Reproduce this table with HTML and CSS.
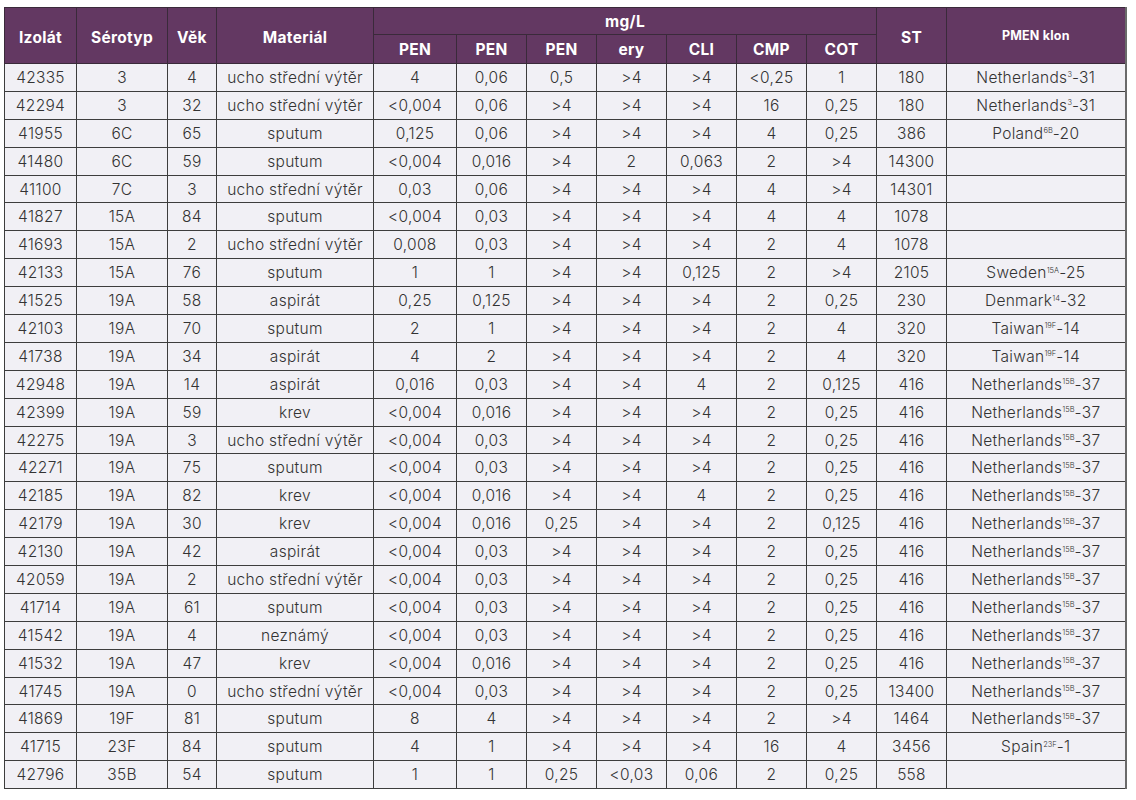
FILE: index.html
```html
<!DOCTYPE html>
<html lang="cs">
<head>
<meta charset="utf-8">
<title>Izoláty</title>
<link rel="stylesheet" href="styles.css">
</head>
<body>
<table class="mic">
<colgroup>
<col class="c-iz"><col class="c-ser"><col class="c-vek"><col class="c-mat">
<col class="c-pen1"><col class="c-n"><col class="c-n"><col class="c-n"><col class="c-n"><col class="c-n"><col class="c-n">
<col class="c-st"><col class="c-pmen">
</colgroup>
<thead>
<tr class="h1">
<th rowspan="2" class="tall">Izolát</th><th rowspan="2" class="tall">Sérotyp</th><th rowspan="2" class="tall">Věk</th><th rowspan="2" class="tall">Materiál</th>
<th colspan="7">mg/L</th><th rowspan="2" class="tall">ST</th><th rowspan="2" class="tall small">PMEN klon</th>
</tr>
<tr class="h2">
<th>PEN</th><th>PEN</th><th>PEN</th><th>ery</th><th>CLI</th><th>CMP</th><th>COT</th>
</tr>
</thead>
<tbody>
<tr><td>42335</td><td>3</td><td>4</td><td>ucho střední výtěr</td><td>4</td><td>0,06</td><td>0,5</td><td>&gt;4</td><td>&gt;4</td><td>&lt;0,25</td><td>1</td><td>180</td><td>Netherlands<sup>3</sup>-31</td></tr>
<tr><td>42294</td><td>3</td><td>32</td><td>ucho střední výtěr</td><td>&lt;0,004</td><td>0,06</td><td>&gt;4</td><td>&gt;4</td><td>&gt;4</td><td>16</td><td>0,25</td><td>180</td><td>Netherlands<sup>3</sup>-31</td></tr>
<tr><td>41955</td><td>6C</td><td>65</td><td>sputum</td><td>0,125</td><td>0,06</td><td>&gt;4</td><td>&gt;4</td><td>&gt;4</td><td>4</td><td>0,25</td><td>386</td><td>Poland<sup>6B</sup>-20</td></tr>
<tr><td>41480</td><td>6C</td><td>59</td><td>sputum</td><td>&lt;0,004</td><td>0,016</td><td>&gt;4</td><td>2</td><td>0,063</td><td>2</td><td>&gt;4</td><td>14300</td><td></td></tr>
<tr><td>41100</td><td>7C</td><td>3</td><td>ucho střední výtěr</td><td>0,03</td><td>0,06</td><td>&gt;4</td><td>&gt;4</td><td>&gt;4</td><td>4</td><td>&gt;4</td><td>14301</td><td></td></tr>
<tr><td>41827</td><td>15A</td><td>84</td><td>sputum</td><td>&lt;0,004</td><td>0,03</td><td>&gt;4</td><td>&gt;4</td><td>&gt;4</td><td>4</td><td>4</td><td>1078</td><td></td></tr>
<tr><td>41693</td><td>15A</td><td>2</td><td>ucho střední výtěr</td><td>0,008</td><td>0,03</td><td>&gt;4</td><td>&gt;4</td><td>&gt;4</td><td>2</td><td>4</td><td>1078</td><td></td></tr>
<tr><td>42133</td><td>15A</td><td>76</td><td>sputum</td><td>1</td><td>1</td><td>&gt;4</td><td>&gt;4</td><td>0,125</td><td>2</td><td>&gt;4</td><td>2105</td><td>Sweden<sup>15A</sup>-25</td></tr>
<tr><td>41525</td><td>19A</td><td>58</td><td>aspirát</td><td>0,25</td><td>0,125</td><td>&gt;4</td><td>&gt;4</td><td>&gt;4</td><td>2</td><td>0,25</td><td>230</td><td>Denmark<sup>14</sup>-32</td></tr>
<tr><td>42103</td><td>19A</td><td>70</td><td>sputum</td><td>2</td><td>1</td><td>&gt;4</td><td>&gt;4</td><td>&gt;4</td><td>2</td><td>4</td><td>320</td><td>Taiwan<sup>19F</sup>-14</td></tr>
<tr><td>41738</td><td>19A</td><td>34</td><td>aspirát</td><td>4</td><td>2</td><td>&gt;4</td><td>&gt;4</td><td>&gt;4</td><td>2</td><td>4</td><td>320</td><td>Taiwan<sup>19F</sup>-14</td></tr>
<tr><td>42948</td><td>19A</td><td>14</td><td>aspirát</td><td>0,016</td><td>0,03</td><td>&gt;4</td><td>&gt;4</td><td>4</td><td>2</td><td>0,125</td><td>416</td><td>Netherlands<sup>15B</sup>-37</td></tr>
<tr><td>42399</td><td>19A</td><td>59</td><td>krev</td><td>&lt;0,004</td><td>0,016</td><td>&gt;4</td><td>&gt;4</td><td>&gt;4</td><td>2</td><td>0,25</td><td>416</td><td>Netherlands<sup>15B</sup>-37</td></tr>
<tr><td>42275</td><td>19A</td><td>3</td><td>ucho střední výtěr</td><td>&lt;0,004</td><td>0,03</td><td>&gt;4</td><td>&gt;4</td><td>&gt;4</td><td>2</td><td>0,25</td><td>416</td><td>Netherlands<sup>15B</sup>-37</td></tr>
<tr><td>42271</td><td>19A</td><td>75</td><td>sputum</td><td>&lt;0,004</td><td>0,03</td><td>&gt;4</td><td>&gt;4</td><td>&gt;4</td><td>2</td><td>0,25</td><td>416</td><td>Netherlands<sup>15B</sup>-37</td></tr>
<tr><td>42185</td><td>19A</td><td>82</td><td>krev</td><td>&lt;0,004</td><td>0,016</td><td>&gt;4</td><td>&gt;4</td><td>4</td><td>2</td><td>0,25</td><td>416</td><td>Netherlands<sup>15B</sup>-37</td></tr>
<tr><td>42179</td><td>19A</td><td>30</td><td>krev</td><td>&lt;0,004</td><td>0,016</td><td>0,25</td><td>&gt;4</td><td>&gt;4</td><td>2</td><td>0,125</td><td>416</td><td>Netherlands<sup>15B</sup>-37</td></tr>
<tr><td>42130</td><td>19A</td><td>42</td><td>aspirát</td><td>&lt;0,004</td><td>0,03</td><td>&gt;4</td><td>&gt;4</td><td>&gt;4</td><td>2</td><td>0,25</td><td>416</td><td>Netherlands<sup>15B</sup>-37</td></tr>
<tr><td>42059</td><td>19A</td><td>2</td><td>ucho střední výtěr</td><td>&lt;0,004</td><td>0,03</td><td>&gt;4</td><td>&gt;4</td><td>&gt;4</td><td>2</td><td>0,25</td><td>416</td><td>Netherlands<sup>15B</sup>-37</td></tr>
<tr><td>41714</td><td>19A</td><td>61</td><td>sputum</td><td>&lt;0,004</td><td>0,03</td><td>&gt;4</td><td>&gt;4</td><td>&gt;4</td><td>2</td><td>0,25</td><td>416</td><td>Netherlands<sup>15B</sup>-37</td></tr>
<tr><td>41542</td><td>19A</td><td>4</td><td>neznámý</td><td>&lt;0,004</td><td>0,03</td><td>&gt;4</td><td>&gt;4</td><td>&gt;4</td><td>2</td><td>0,25</td><td>416</td><td>Netherlands<sup>15B</sup>-37</td></tr>
<tr><td>41532</td><td>19A</td><td>47</td><td>krev</td><td>&lt;0,004</td><td>0,016</td><td>&gt;4</td><td>&gt;4</td><td>&gt;4</td><td>2</td><td>0,25</td><td>416</td><td>Netherlands<sup>15B</sup>-37</td></tr>
<tr><td>41745</td><td>19A</td><td>0</td><td>ucho střední výtěr</td><td>&lt;0,004</td><td>0,03</td><td>&gt;4</td><td>&gt;4</td><td>&gt;4</td><td>2</td><td>0,25</td><td>13400</td><td>Netherlands<sup>15B</sup>-37</td></tr>
<tr><td>41869</td><td>19F</td><td>81</td><td>sputum</td><td>8</td><td>4</td><td>&gt;4</td><td>&gt;4</td><td>&gt;4</td><td>2</td><td>&gt;4</td><td>1464</td><td>Netherlands<sup>15B</sup>-37</td></tr>
<tr><td>41715</td><td>23F</td><td>84</td><td>sputum</td><td>4</td><td>1</td><td>&gt;4</td><td>&gt;4</td><td>&gt;4</td><td>16</td><td>4</td><td>3456</td><td>Spain<sup>23F</sup>-1</td></tr>
<tr><td>42796</td><td>35B</td><td>54</td><td>sputum</td><td>1</td><td>1</td><td>0,25</td><td>&lt;0,03</td><td>0,06</td><td>2</td><td>0,25</td><td>558</td><td></td></tr>
</tbody>
</table>
</body>
</html>
```
FILE: styles.css
```css
html, body {
  margin: 0;
  padding: 0;
  background: #ffffff;
}

body {
  padding: 7px 0 0 4px;
  font-family: Inter, "Open Sans", "Liberation Sans", sans-serif;
}

.mic {
  border-collapse: collapse;
  table-layout: fixed;
  width: 1122px;
  border: 1px solid #3a3a3a;
  border-right: 2px solid #6a6a6a;
}

.c-iz { width: 72px; }
.c-ser { width: 91px; }
.c-vek { width: 49px; }
.c-mat { width: 157px; }
.c-pen1 { width: 83px; }
.c-n { width: 70px; }
.c-st { width: 70px; }
.c-pmen { width: 179px; }

.mic th {
  background: #633862;
  color: #ffffff;
  font-weight: 700;
  font-size: 15.5px;
  letter-spacing: 0.3px;
  text-align: center;
  padding: 0;
  border: 1px solid #3a2a3a;
}

.mic th.tall {
  padding-top: 4px;
}

.mic th.small {
  font-size: 12.5px;
  letter-spacing: 0.2px;
  padding-top: 0;
}

.h1 th {
  height: 26px;
}

.h2 th {
  height: 28px;
}

.mic td {
  background: #f1f0f5;
  color: #333333;
  font-weight: 300;
  font-size: 15.5px;
  letter-spacing: 0.3px;
  text-align: center;
  padding: 0;
  height: 26.9px;
  border: 1px solid #3d3d3d;
  white-space: nowrap;
}

.mic sup {
  font-size: 7.5px;
  letter-spacing: 0;
  vertical-align: 0;
  position: relative;
  top: -5.5px;
}
```
